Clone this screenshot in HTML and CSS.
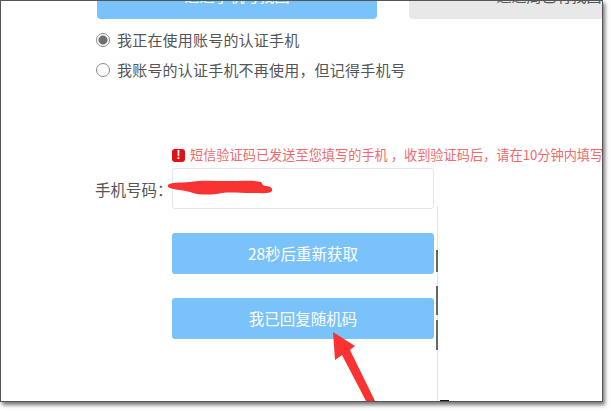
FILE: index.html
```html
<!DOCTYPE html>
<html lang="zh-CN">
<head>
<meta charset="utf-8">
<title>找回密码</title>
<link rel="stylesheet" href="styles.css">
</head>
<body>
<main class="shot">
  <div class="tabs">
    <a class="tab tab-active">通过手机号找回</a>
    <a class="tab tab-idle">通过周已有找回</a>
  </div>
  <div class="choices">
    <label class="choice"><span class="radio radio-on"></span>我正在使用账号的认证手机</label>
    <label class="choice"><span class="radio"></span>我账号的认证手机不再使用，但记得手机号</label>
  </div>
  <p class="notice"><span class="notice-icon">!</span>短信验证码已发送至您填写的手机 ，收到验证码后，请在10分钟内填写</p>
  <div class="form">
    <div class="phone-row">
      <span class="phone-label">手机号码：</span>
      <div class="phone-input"></div>
    </div>
    <button class="btn btn-first">28秒后重新获取</button>
    <button class="btn btn-second">我已回复随机码</button>
  </div>
  <div class="side-line"></div>
  <span class="tick tick-a"></span>
  <span class="tick tick-b"></span>
  <span class="tick tick-c"></span>
  <span class="tick-foot"></span>
  <svg class="overlay" viewBox="0 0 602 401" aria-hidden="true">
    <path d="M168 185 C170 182 180 183 190 182 C200 180 215 181 228 181 C240 181 256 180 261 182 C263 184 262 185 265 186 C270 186 273 188 272 191 C270 194 262 193 252 193 C240 193 230 192 222 193 C212 195 200 195 193 193 C186 190 172 190 168 187 Z" fill="#f93232"/>
    <path d="M333 332 L355 346 L350 350 L375 401 L366 401 L342 355 L335 360 Z" fill="#f93232"/>
  </svg>
</main>
</body>
</html>
```
FILE: styles.css
```css
* { box-sizing: border-box; }
html, body { margin: 0; padding: 0; background: #fff; }
body {
  width: 611px;
  height: 411px;
  overflow: hidden;
  font-family: "Noto Sans CJK SC", "Noto Sans", sans-serif;
}
.shot {
  position: relative;
  width: 603px;
  height: 402px;
  border: 1px solid #555;
  background: #fff;
  overflow: hidden;
  box-shadow: 2px 3px 4px rgba(0, 0, 0, .55);
}
.tabs {
  display: flex;
  gap: 32px;
  margin: -24px 0 0 96px;
  height: 42px;
}
.tab {
  display: block;
  flex: none;
  width: 280px;
  height: 42px;
  line-height: 38px;
  border-radius: 4px;
  text-align: center;
  font-size: 15px;
}
.tab-active { background: #7ac2fa; color: #fff; }
.tab-idle { background: #e8e8e8; color: #555; }
.choices {
  display: flex;
  flex-direction: column;
  gap: 9px;
  margin: 10px 0 0 95px;
}
.choice {
  display: flex;
  align-items: center;
  height: 21px;
  font-size: 15px;
  letter-spacing: .2px;
  color: #555;
  white-space: nowrap;
}
.radio {
  width: 14px;
  height: 14px;
  margin-right: 7px;
  border: 1px solid #8a8a8a;
  border-radius: 50%;
  background: #fff;
  flex: none;
}
.radio-on { background: radial-gradient(circle, #6f6f6f 0 4px, #fff 5px); }
.notice {
  display: flex;
  align-items: center;
  height: 20px;
  margin: 65px 0 0 171px;
  font-size: 13.2px;
  line-height: 20px;
  color: #ee6a6d;
  white-space: nowrap;
}
.notice-icon {
  flex: none;
  width: 13px;
  height: 13px;
  margin-right: 5px;
  border-radius: 3px;
  background: #dd1118;
  color: #fff;
  font: bold 12px/13px "Liberation Sans", sans-serif;
  text-align: center;
}
.form { margin: 3px 0 0 94px; }
.phone-row { display: flex; align-items: center; }
.phone-label {
  width: 77px;
  font-size: 15.5px;
  color: #555;
  white-space: nowrap;
}
.phone-input {
  width: 262px;
  height: 41px;
  border: 1px solid #e6e6e6;
  border-radius: 3px;
}
.btn {
  display: block;
  width: 262px;
  height: 41px;
  margin: 24px 0 0 77px;
  border: 0;
  border-radius: 3px;
  background: #7ac2fa;
  color: #fff;
  font-family: inherit;
  font-size: 15.5px;
  padding: 0 0 2px;
}
.side-line {
  position: absolute;
  left: 436px;
  top: 205px;
  width: 1px;
  height: 195px;
  background: #e2e2e2;
}
.tick {
  position: absolute;
  left: 435px;
  width: 2px;
  background: #666;
}
.tick-a { top: 249px; height: 22px; }
.tick-b { top: 285px; height: 29px; }
.tick-c { top: 319px; height: 30px; }
.tick-foot {
  position: absolute;
  left: 439px;
  bottom: 0;
  width: 9px;
  height: 1px;
  background: #111;
}
.overlay {
  position: absolute;
  left: -1px;
  top: -1px;
  width: 602px;
  height: 401px;
  pointer-events: none;
}
```
